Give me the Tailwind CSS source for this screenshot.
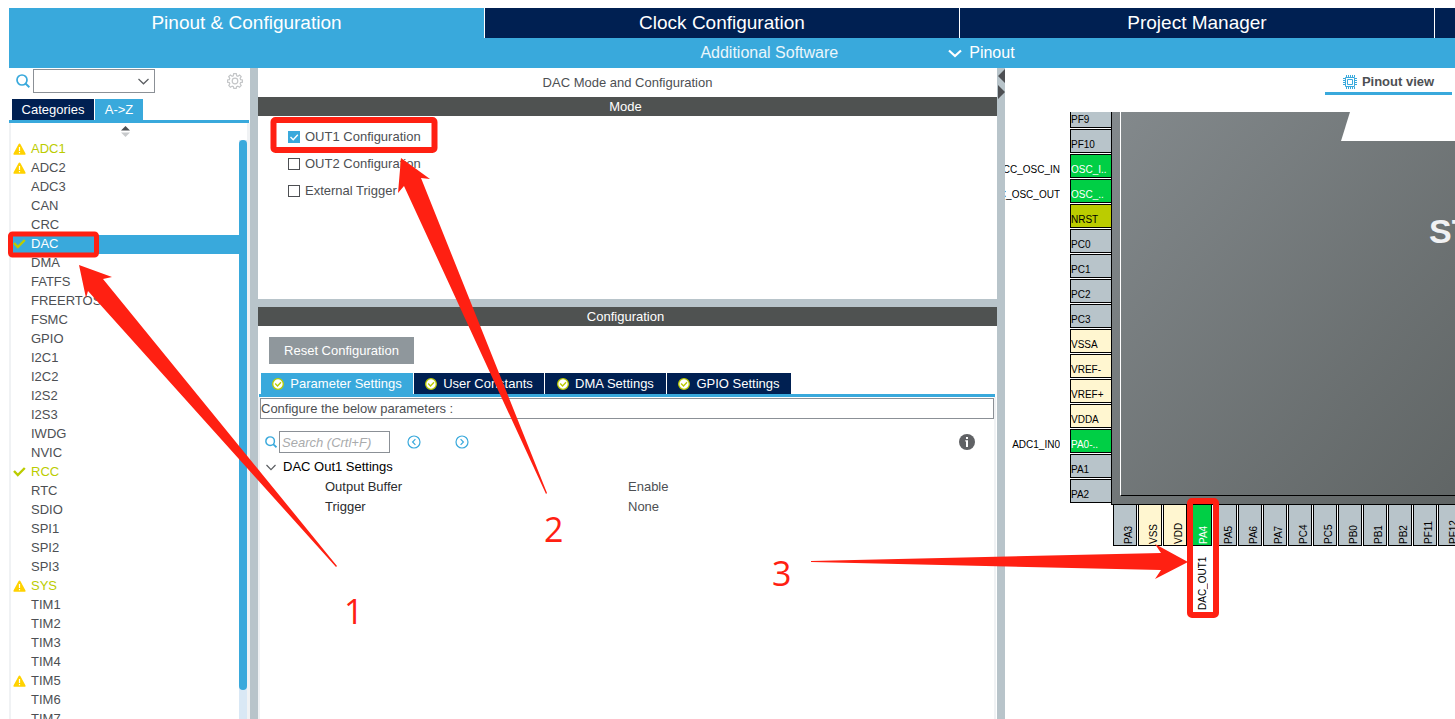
<!DOCTYPE html>
<html lang="en">
<head>
<meta charset="utf-8">
<title>Pinout &amp; Configuration</title>
<script src="https://cdn.jsdelivr.net/npm/@tailwindcss/browser@4"></script>
</head>
<body class="relative h-screen overflow-hidden bg-white font-['Liberation_Sans',Arial,sans-serif] text-[13px] text-[#4d4f53]">
<svg class="hidden" aria-hidden="true">
  <symbol id="warn" viewBox="0 0 13 12"><path d="M6.5 0.4 Q7.1 0.4 7.5 1.2 L12.5 10.4 Q13 11.8 11.8 11.8 H1.2 Q0 11.8 0.5 10.4 L5.5 1.2 Q5.9 .4 6.5 .4Z" fill="#ffd200"/><path d="M6.5 4v4M6.5 9v1.2" stroke="#fff" stroke-width="1.2"/></symbol>
  <symbol id="tick" viewBox="0 0 13 10"><path d="M1 4 4.8 8 11.8 1" fill="none" stroke="#bbcc00" stroke-width="2.4"/></symbol>
  <symbol id="lens" viewBox="0 0 14 14"><circle cx="6" cy="6" r="5" fill="none" stroke="#39a9dc" stroke-width="1.7"/><path d="M9.5 9.5 13.4 13.2" stroke="#39a9dc" stroke-width="2"/></symbol>
  <symbol id="ok" viewBox="0 0 12 12"><circle cx="6" cy="6" r="5.3" fill="#fff" stroke="#bbcc00" stroke-width="1.3"/><path d="M3.2 5.6 5.5 7.9 9 4.3" fill="none" stroke="#bbcc00" stroke-width="1.4"/></symbol>
</svg>

<div class="flex h-full flex-col pt-2 pl-[9px]">
  <header class="shrink-0">
    <nav class="grid h-[30px] grid-cols-[475fr_474fr_474fr_20fr] gap-px text-[19px] text-white">
      <button class="bg-[#39a9dc]">Pinout &amp; Configuration</button>
      <button class="bg-[#002052]">Clock Configuration</button>
      <button class="bg-[#002052]">Project Manager</button>
      <button class="bg-[#002052]" aria-label="Tools"></button>
    </nav>
    <div class="flex h-[30px] items-center justify-center gap-[110px] bg-[#39a9dc] pl-[251px] text-base text-white">
      <button class="text-white/90">Additional Software</button>
      <button class="flex items-center gap-[7px]">
        <svg class="h-[9px] w-[14px]" viewBox="0 0 14 9"><path d="M1 1.5 7 7 13 1.5" fill="none" stroke="#fff" stroke-width="2.2"/></svg>Pinout</button>
    </div>
  </header>

  <main class="flex min-h-0 flex-1">
    <aside class="flex w-[241px] shrink-0 flex-col">
      <div class="flex h-[31px] items-center pr-[7px] pb-[5px] pl-[7px]">
        <svg class="mr-[3px] size-[14px]"><use href="#lens"/></svg>
        <label class="relative block"><span class="sr-only">Search peripherals</span>
          <select class="block h-6 w-[122px] appearance-none border border-[#8b9096] bg-white"><option></option></select>
          <svg class="absolute top-[9px] right-[6px] h-[7px] w-[11px]" viewBox="0 0 11 7"><path d="M.5 1 5.5 5.8 10.5 1" fill="none" stroke="#5a5d61" stroke-width="1.2"/></svg>
        </label>
        <button class="ml-auto" aria-label="Settings"><svg class="size-4" viewBox="0 0 16 16" fill="none" stroke="#c4c6c8"><path d="M6.7.7h2.6l.4 2 1.2.5L12.6 2l1.6 1.6-1.1 1.8.5 1.2 1.8.3v2.3l-1.8.4-.5 1.2 1.1 1.7-1.7 1.7-1.7-1.1-1.2.5-.4 1.8H6.8l-.4-1.8-1.2-.5-1.8 1.1-1.6-1.7 1-1.7-.5-1.2-1.8-.4V6.9l1.8-.3.5-1.2-1.1-1.8L3.4 2l1.7 1.2 1.2-.5z" stroke-width="1.2"/><circle cx="8" cy="8" r="2.8" stroke-width="1.2"/></svg></button>
      </div>
      <div class="mr-px flex gap-px border-b-[3px] border-[#39a9dc] pl-[3px] text-white">
        <button class="h-[21px] w-[82px] bg-[#002052]">Categories</button>
        <button class="h-[21px] w-12 bg-[#39a9dc]">A-&gt;Z</button>
      </div>
      <div class="flex min-h-0 flex-1 flex-col border-r-[3px] border-l-2 border-[#f0f2f4]">
        <div class="flex h-[17px] shrink-0 items-center justify-center pr-2">
          <svg class="h-[11px] w-[9px]" viewBox="0 0 9 11"><path d="M4.5 0 9 4.5H0z" fill="#4d4f53"/><path d="M0 6.5H9L4.5 11z" fill="#c8cacc"/></svg>
        </div>
        <div class="flex min-h-0 flex-1">
          <ul id="peripherals" class="min-w-0 flex-1 overflow-hidden"></ul>
          <div class="w-2 bg-[#d9e8f5]"><div class="h-[95%] rounded bg-[#39a9dc]"></div></div>
        </div>
      </div>
    </aside>
    <div class="w-2 shrink-0 bg-[#b8c4ca]"></div>

    <section class="flex w-[739px] shrink-0 flex-col">
      <h1 class="flex h-[29px] shrink-0 items-center justify-center">DAC Mode and Configuration</h1>
      <h2 class="flex h-[19px] shrink-0 items-center justify-center bg-[#4f5251] pr-1 text-white">Mode</h2>
      <form class="flex h-[183px] shrink-0 flex-col gap-3 pt-[13px] pl-[30px]">
        <label class="flex h-[15px] items-center gap-[5px]"><input type="checkbox" checked class="peer sr-only"><svg class="size-3" viewBox="0 0 12 12"><path d="M0 0h12v12H0z" fill="#39a9dc"/><path d="M2.5 6 5.2 8.7 9.8 3.8" fill="none" stroke="#fff" stroke-width="1.4"/></svg>OUT1 Configuration</label>
        <label class="flex h-[15px] items-center gap-[5px]"><input type="checkbox" class="size-3 appearance-none border border-[#4d4f53]">OUT2 Configuration</label>
        <label class="flex h-[15px] items-center gap-[5px]"><input type="checkbox" class="size-3 appearance-none border border-[#4d4f53]">External Trigger</label>
      </form>
      <div class="h-2 shrink-0 bg-[#b8c4ca]"></div>
      <h2 class="flex h-[19px] shrink-0 items-center justify-center bg-[#4f5251] pr-1 text-white">Configuration</h2>
      <div class="px-[11px] pt-[11px] pb-[9px]"><button class="h-[27px] w-[145px] bg-[#8f979c] text-white">Reset Configuration</button></div>
      <div class="mr-[2px] ml-px flex gap-px border-b-[3px] border-[#39a9dc] pl-[2px] text-white">
        <button class="flex h-[21px] w-[152px] items-center justify-center gap-[6px] bg-[#39a9dc]"><svg class="size-3"><use href="#ok"/></svg>Parameter Settings</button>
        <button class="flex h-[21px] w-[130px] items-center justify-center gap-[6px] bg-[#002052]"><svg class="size-3"><use href="#ok"/></svg>User Constants</button>
        <button class="flex h-[21px] w-[121px] items-center justify-center gap-[6px] bg-[#002052]"><svg class="size-3"><use href="#ok"/></svg>DMA Settings</button>
        <button class="flex h-[21px] w-[124px] items-center justify-center gap-[6px] bg-[#002052]"><svg class="size-3"><use href="#ok"/></svg>GPIO Settings</button>
      </div>
      <div class="mr-px flex-1 border-x-2 border-[#f0f2f4] pt-px">
        <p class="flex h-[21px] items-center border border-[#8b9096]">Configure the below parameters :</p>
        <div class="flex h-[38px] items-center pt-3 pr-[19px] pb-1 pl-[5px]">
          <svg class="mr-[2px] size-3" viewBox="0 0 14 14"><use href="#lens"/></svg>
          <input type="search" aria-label="Search" placeholder="Search (Crtl+F)" class="h-[22px] w-[111px] border border-[#8b9096] px-[2px] italic placeholder:text-[#a9abad]">
          <button class="ml-[17px]" aria-label="Previous"><svg class="size-[14px]" viewBox="0 0 14 14" fill="none" stroke="#39a9dc" stroke-width="1.2"><circle cx="7" cy="7" r="6"/><path d="M8.4 4.2 5.6 7l2.8 2.8"/></svg></button>
          <button class="ml-[34px]" aria-label="Next"><svg class="size-[14px]" viewBox="0 0 14 14" fill="none" stroke="#39a9dc" stroke-width="1.2"><circle cx="7" cy="7" r="6"/><path d="M5.6 4.2 8.4 7 5.6 9.8"/></svg></button>
          <button class="ml-auto" aria-label="Information"><svg class="size-4" viewBox="0 0 16 16"><circle cx="8" cy="8" r="8" fill="#606265"/><path d="M7 3h2v2H7zM6.2 6.2H9V13H7V7.4h-.8z" fill="#fff"/></svg></button>
        </div>
        <div class="flex h-5 items-center gap-[7px] pl-[6px] text-black"><svg class="h-[7px] w-[10px]" viewBox="0 0 10 7"><path d="M.5 1 5 5.6 9.5 1" fill="none" stroke="#5a5d61" stroke-width="1.2"/></svg>DAC Out1 Settings</div>
        <dl class="grid grid-cols-[303px_1fr] pl-[65px] leading-5">
          <dt class="text-[#2b2c2e]">Output Buffer</dt><dd>Enable</dd>
          <dt class="text-[#2b2c2e]">Trigger</dt><dd>None</dd>
        </dl>
      </div>
    </section>
    <div class="w-2 shrink-0 bg-[#b8c4ca]">
      <svg class="h-8 w-2" viewBox="0 0 8 32"><path d="M8 1v14L1 8zM1 17v14l7-7z" fill="#4d4f53"/></svg>
    </div>

    <section class="flex min-w-0 flex-1 flex-col">
      <div class="flex h-11 shrink-0 justify-end pr-[3px]">
        <button class="flex h-[27px] w-[127px] items-center justify-center gap-[5px] border-b-[3px] border-[#39a9dc] pt-1 font-bold"><svg class="size-[14px]" viewBox="0 0 14 14" fill="none" stroke="#39a9dc"><path d="M2.5 2.5h9v9h-9zM4.5 4.5h5v5h-5z"/><path d="M3.5 0v2M5.5 0v2M7.5 0v2M9.5 0v2M11.5 0v2M3.5 12v2M5.5 12v2M7.5 12v2M9.5 12v2M11.5 12v2M0 3.5h2M0 5.5h2M0 7.5h2M0 9.5h2M12 3.5h2M12 5.5h2M12 7.5h2M12 9.5h2"/></svg>Pinout view</button>
      </div>
      <div class="min-h-0 flex-1 overflow-hidden text-[10px] text-black">
        <div class="flex h-[393px]">
          <div class="flex h-full w-[106px] shrink-0 flex-col justify-end gap-px pb-[2px]" id="left-pins"></div>
          <div class="relative min-w-0 flex-1 overflow-hidden border-b border-l border-black bg-linear-to-br from-[#83898c] to-[#606565] pb-2 pl-2">
            <div class="flex h-full items-start justify-end border-b border-l border-b-black border-l-white pt-[94px]">
              <span class="w-[26px] overflow-hidden text-[34px] font-bold whitespace-nowrap text-[#f0f1f3]">ST</span>
            </div>
            <svg class="absolute top-0 right-0 h-[29px] w-[114px]" viewBox="0 0 114 29"><path d="M9 0H114V29H0z" fill="#fff"/></svg>
          </div>
        </div>
        <div class="-mt-px flex gap-px pl-[108px]" id="bottom-pins"></div>
      </div>
    </section>
  </main>
</div>

<svg class="pointer-events-none absolute inset-0 h-full w-full font-['Open_Sans','Noto_Sans',sans-serif] text-[34px]" fill="#ff2012">
  <g fill="none" stroke="#ff2012" stroke-width="6">
    <rect x="10.5" y="234" width="86" height="21" rx="2" stroke-width="5"/>
    <rect x="273.5" y="120" width="161" height="30" rx="2"/>
    <rect x="1190" y="501" width="26" height="114" rx="2"/>
  </g>
  <path d="M79 265 112 277 103 279 337 566 336 567 88 291 86 298Z"/>
  <path d="M401 158 430 179 421 178 547 493 546 494 404 186 398 193Z"/>
  <path d="M1188 562 1155 579 1161 570 811 562 811 561 1161 553 1155 544Z"/>
  <text x="344" y="624">1</text>
  <text x="544" y="542">2</text>
  <text x="772" y="586">3</text>
</svg>

<script>
const icons = {
  warn: '<svg class="h-3 w-[13px]"><use href="#warn"/></svg>',
  tick: '<svg class="h-[10px] w-[13px]"><use href="#tick"/></svg>',
  none: ''
};
const peripherals = [['ADC1','warn',1],['ADC2','warn'],['ADC3'],['CAN'],['CRC'],['DAC','tick'],['DMA'],['FATFS'],['FREERTOS'],['FSMC'],['GPIO'],['I2C1'],['I2C2'],['I2S2'],['I2S3'],['IWDG'],['NVIC'],['RCC','tick',1],['RTC'],['SDIO'],['SPI1'],['SPI2'],['SPI3'],['SYS','warn',1],['TIM1'],['TIM2'],['TIM3'],['TIM4'],['TIM5','warn'],['TIM6'],['TIM7']];
document.getElementById('peripherals').innerHTML = peripherals.map(([name, icon = 'none', on]) => {
  const tone = name === 'DAC' ? 'bg-[#39a9dc] text-white' : on ? 'text-[#bbcc00]' : '';
  return `<li class="flex h-[19px] items-center pb-px pl-[2px] leading-[18px] ${tone}"><span class="w-[18px]">${icons[icon]}</span>${name}</li>`;
}).join('');

const fills = { io: 'bg-[#b8c4ca]', on: 'bg-[#00cf45] text-white', rst: 'bg-[#bbcc00]', pwr: 'bg-[#fff6d0]' };
const left = [['PF9','io'],['PF10','io'],['OSC_I..','on','RCC_OSC_IN'],['OSC_..','on','RCC_OSC_OUT'],['NRST','rst'],['PC0','io'],['PC1','io'],['PC2','io'],['PC3','io'],['VSSA','pwr'],['VREF-','pwr'],['VREF+','pwr'],['VDDA','pwr'],['PA0-..','on','ADC1_IN0'],['PA1','io'],['PA2','io']];
document.getElementById('left-pins').innerHTML = left.map(([name, kind, signal = '']) =>
  `<div class="flex h-6 shrink-0"><span class="flex w-[55px] items-end justify-end overflow-hidden pb-px leading-[14px] whitespace-nowrap">${signal}</span><span class="ml-[10px] flex w-[41px] items-end border border-r-0 border-black leading-[14px] whitespace-nowrap ${fills[kind]}">${name}</span></div>`).join('');

const bottom = [['PA3','io'],['VSS','pwr'],['VDD','pwr'],['PA4','on','DAC_OUT1'],['PA5','io'],['PA6','io'],['PA7','io'],['PC4','io'],['PC5','io'],['PB0','io'],['PB1','io'],['PB2','io'],['PF11','io'],['PF12','io']];
document.getElementById('bottom-pins').innerHTML = bottom.map(([name, kind, signal = '']) =>
  `<div class="w-6 shrink-0"><span class="flex h-[42px] w-6 rotate-180 items-start justify-start border border-black pt-px pr-2 leading-[14px] [writing-mode:vertical-rl] ${fills[kind]}">${name}</span><span class="mt-2 flex h-14 w-6 rotate-180 pr-2 leading-[14px] [writing-mode:vertical-rl]">${signal}</span></div>`).join('');
</script>
</body>
</html>
